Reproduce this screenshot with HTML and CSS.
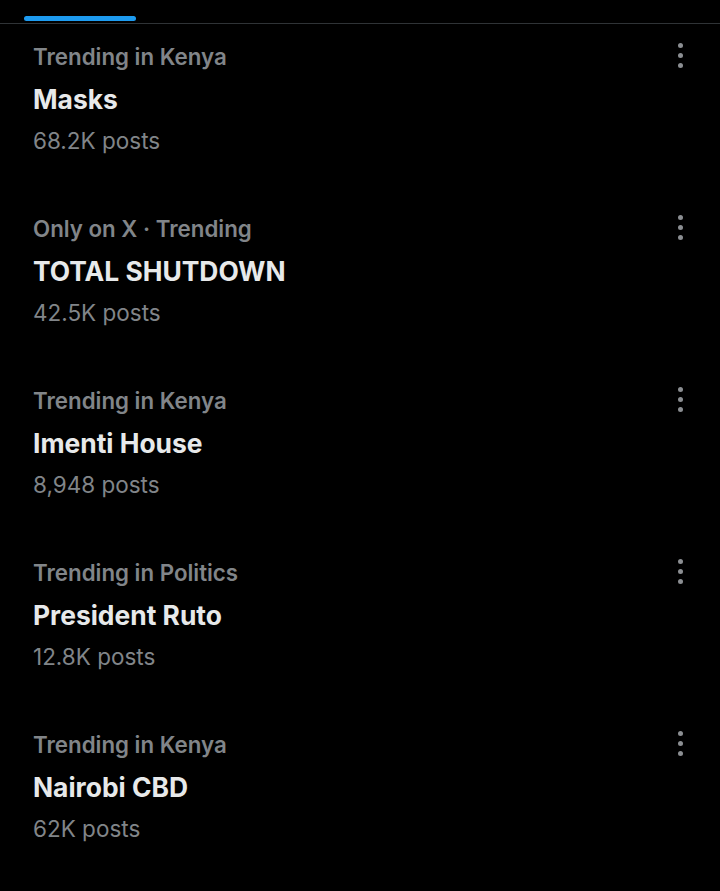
FILE: index.html
```html
<!DOCTYPE html>
<html lang="en">
<head>
  <meta charset="UTF-8">
  <title>Trending</title>
  <link rel="stylesheet" href="styles.css">
</head>
<body>

  <!-- tab indicator -->
  <div class="tabs">
    <div class="tab-bar"></div>
  </div>

  <div class="trends">
    <div class="trend">
      <div class="trend-text">
        <div class="meta">Trending in Kenya</div>
        <div class="title">Masks</div>
        <div class="count">68.2K posts</div>
      </div>
      <div class="more"><span></span><span></span><span></span></div>
    </div>

    <div class="trend">
      <div class="trend-text">
        <div class="meta">Only on X · Trending</div>
        <div class="title">TOTAL SHUTDOWN</div>
        <div class="count">42.5K posts</div>
      </div>
      <div class="more"><span></span><span></span><span></span></div>
    </div>

    <div class="trend">
      <div class="trend-text">
        <div class="meta">Trending in Kenya</div>
        <div class="title">Imenti House</div>
        <div class="count">8,948 posts</div>
      </div>
      <div class="more"><span></span><span></span><span></span></div>
    </div>

    <div class="trend">
      <div class="trend-text">
        <div class="meta">Trending in Politics</div>
        <div class="title">President Ruto</div>
        <div class="count">12.8K posts</div>
      </div>
      <div class="more"><span></span><span></span><span></span></div>
    </div>

    <div class="trend">
      <div class="trend-text">
        <div class="meta">Trending in Kenya</div>
        <div class="title">Nairobi CBD</div>
        <div class="count">62K posts</div>
      </div>
      <div class="more"><span></span><span></span><span></span></div>
    </div>
  </div>

</body>
</html>
```

FILE: styles.css
```css
body {
  margin: 0;
  background-color: #000;
  font-family: Inter, "Open Sans", Arial, sans-serif;
  color: #e7e9ea;
}

.tabs {
  height: 23px;
  border-bottom: 1px solid #2f3336;
  padding-left: 24px;
  display: flex;
  align-items: flex-end;
}

.tab-bar {
  width: 112px;
  height: 5px;
  margin-bottom: 2px;
  border-radius: 3px;
  background-color: #1d9bf0;
}

.trend {
  display: flex;
  justify-content: space-between;
  padding: 12px 28px 34px 33px;
}

.meta,
.title,
.count {
  height: 42px;
  line-height: 42px;
  white-space: nowrap;
}

.meta {
  font-size: 22.3px;
  font-weight: 600;
  color: #818589;
}

.title {
  font-size: 26.4px;
  font-weight: 700;
  color: #e7e9ea;
}

.count {
  font-size: 22.5px;
  color: #818589;
}

.more {
  width: 24px;
  height: 42px;
  margin-top: -2px;
  display: flex;
  flex-direction: column;
  align-items: center;
  justify-content: center;
  gap: 5px;
}

.more span {
  width: 5px;
  height: 5px;
  border-radius: 50%;
  background-color: #8b8e92;
}
```
